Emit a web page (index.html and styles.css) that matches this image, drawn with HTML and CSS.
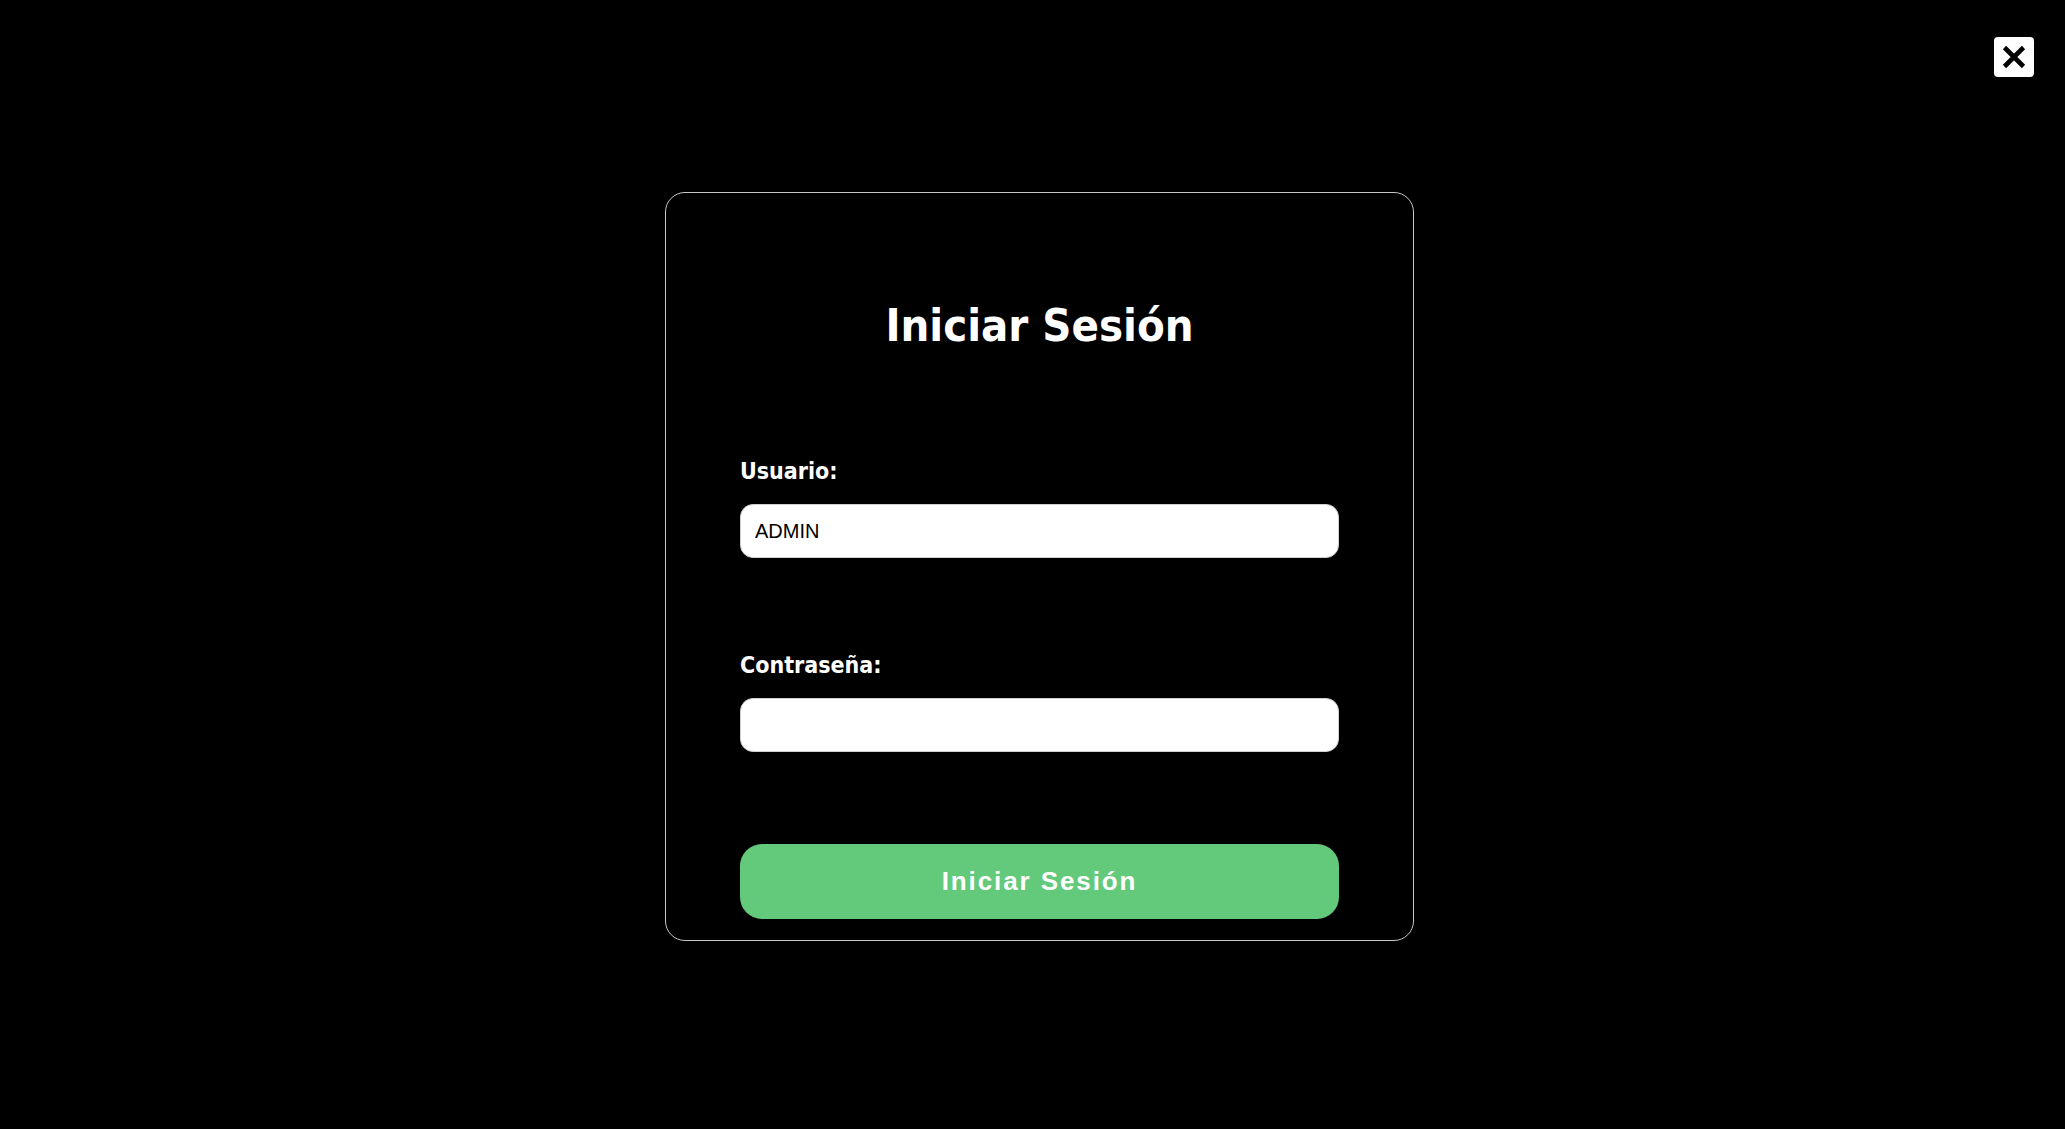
FILE: index.html
```html
<!DOCTYPE html>
<html lang="es">
<head>
<meta charset="utf-8">
<title>Iniciar Sesión</title>
<link rel="stylesheet" href="styles.css">
</head>
<body>
<button class="close-btn" aria-label="Cerrar">
  <svg viewBox="0 0 40 40" width="40" height="40"><path d="M10.5 10.5 L29.5 29.5 M29.5 10.5 L10.5 29.5" stroke="#000" stroke-width="4.6" stroke-linecap="butt" fill="none"/></svg>
</button>
<main class="stage">
  <form class="card">
    <h1 class="title">Iniciar Sesión</h1>
    <label class="label label-user" for="user">Usuario:</label>
    <input class="field" id="user" type="text" value="ADMIN">
    <label class="label label-pass" for="pass">Contraseña:</label>
    <input class="field" id="pass" type="password">
    <button class="submit" type="button">Iniciar Sesión</button>
  </form>
</main>
</body>
</html>
```
FILE: styles.css
```css
html, body {
  margin: 0;
  padding: 0;
  background: #000;
  height: 100%;
}
body {
  font-family: "DejaVu Sans", sans-serif;
  color: #fff;
}
.close-btn {
  position: absolute;
  top: 37px;
  right: 31px;
  width: 40px;
  height: 40px;
  padding: 0;
  border: none;
  border-radius: 4px;
  background: #fff;
  display: flex;
  align-items: center;
  justify-content: center;
}
.close-btn svg { display: block; }
.stage {
  box-sizing: border-box;
  height: 100%;
  display: flex;
  align-items: center;
  justify-content: center;
  padding: 4px 0 0 14px;
}
.card {
  box-sizing: border-box;
  width: 749px;
  border: 1px solid #c8c8c8;
  border-radius: 20px;
  padding: 105px 74px 21px;
  display: flex;
  flex-direction: column;
}
.title {
  margin: 0;
  font-family: "DejaVu Sans Condensed", "DejaVu Sans", sans-serif;
  font-stretch: condensed;
  font-weight: bold;
  font-size: 45px;
  line-height: 56px;
  text-align: center;
  color: #fff;
}
.label {
  font-family: "DejaVu Sans Condensed", "DejaVu Sans", sans-serif;
  font-stretch: condensed;
  font-weight: bold;
  font-size: 23px;
  line-height: 26px;
  color: #fff;
  margin-bottom: 20px;
}
.label-user { margin-top: 104px; }
.label-pass { margin-top: 94px; }
.field {
  box-sizing: border-box;
  height: 54px;
  width: 100%;
  margin: 0;
  border: 1px solid #cfcfcf;
  border-radius: 13px;
  background: #fff;
  padding: 0 14px;
  font-family: "Liberation Sans", Arial, sans-serif;
  font-size: 20px;
  color: #000;
  outline: none;
}
.submit {
  margin-top: 92px;
  height: 75px;
  width: 100%;
  border: none;
  border-radius: 22px;
  background: #63c97b;
  color: #fff;
  font-family: "Liberation Sans", Arial, sans-serif;
  font-weight: bold;
  font-size: 26px;
  letter-spacing: 1.9px;
  padding: 0;
}
```
